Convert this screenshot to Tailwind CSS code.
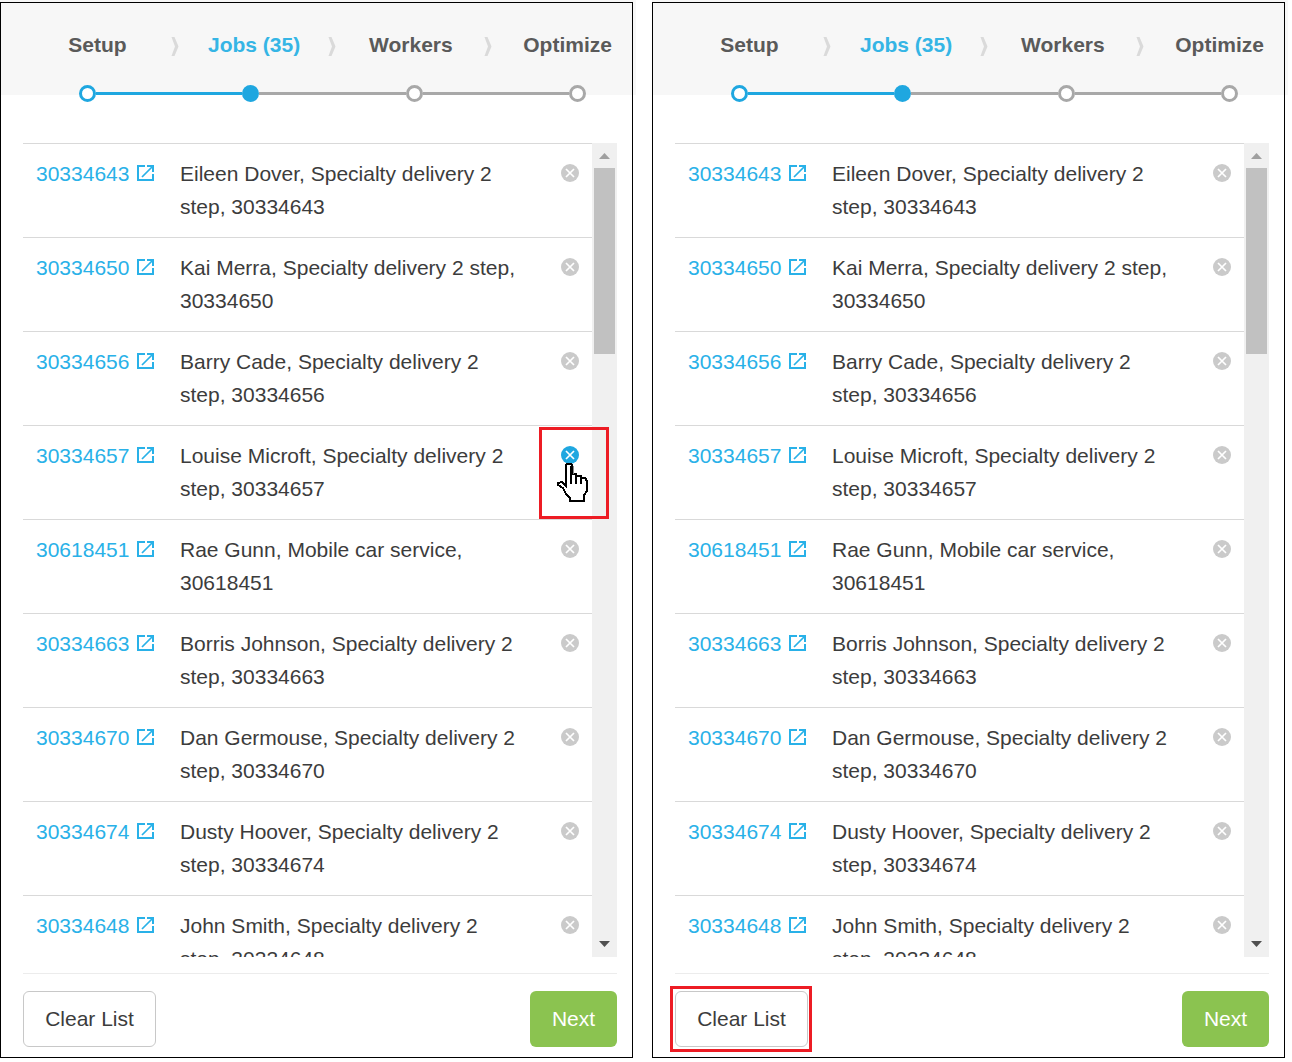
<!DOCTYPE html>
<html lang="en">

<head>
    <meta charset="UTF-8">
    <meta name="viewport" content="width=device-width, initial-scale=1.0">
    <title>Route Optimizer - Jobs</title>
    <script src="https://cdn.jsdelivr.net/npm/@tailwindcss/browser@4"></script>
</head>

<body class="bg-white font-['Liberation_Sans',Arial,sans-serif] text-[21px] text-[#3c3c3c]">
    <main id="panels" class="isolate grid grid-cols-2 gap-[19px] pt-[2px] pr-[7px]"></main>

    <script>
        const jobs = [
            { id: "30334643", name: "Eileen Dover", type: "Specialty delivery 2 step" },
            { id: "30334650", name: "Kai Merra", type: "Specialty delivery 2 step" },
            { id: "30334656", name: "Barry Cade", type: "Specialty delivery 2 step" },
            { id: "30334657", name: "Louise Microft", type: "Specialty delivery 2 step" },
            { id: "30618451", name: "Rae Gunn", type: "Mobile car service" },
            { id: "30334663", name: "Borris Johnson", type: "Specialty delivery 2 step" },
            { id: "30334670", name: "Dan Germouse", type: "Specialty delivery 2 step" },
            { id: "30334674", name: "Dusty Hoover", type: "Specialty delivery 2 step" },
            { id: "30334648", name: "John Smith", type: "Specialty delivery 2 step" }
        ];

        const steps = ["Setup", "Jobs (35)", "Workers", "Optimize"];

        // Each panel marks one way of removing jobs
        const panels = [
            { hoveredJob: "30334657", markClear: false },
            { hoveredJob: null, markClear: true }
        ];

        const cursor = `
            <svg class="absolute left-[15px] top-[33px] w-[32px] h-[40px]" viewBox="0 0 32 40" shape-rendering="crispEdges" aria-hidden="true">
                <path d="M9 23V2l1-1h4l1 1v9h4v2h5v2h4l2 3v10l-3 4v6H13v-3l-4-4-3-6-5-3v-2l4-1z" fill="#fff" stroke="#000" stroke-width="2"/>
                <path d="M14 3v18M19 12v9M24 14v7" fill="none" stroke="#000" stroke-width="2"/>
                <path d="M16 3v8" stroke="#8a8a8a"/>
            </svg>`;

        function renderStep(label, index) {
            return `
                <li class="relative text-center ${index === 1 ? 'text-[#35b5e5]' : ''}">
                    <a href="#">${label}</a>
                    ${index < 3 ? `
                    <svg class="absolute -right-[3px] top-2 w-2 h-5" viewBox="0 0 8 20" aria-hidden="true">
                        <path d="M0.500 0h3l4 9.500-4 9.500h-3l3.500-9.500z" fill="#dadada"/>
                    </svg>` : ''}
                </li>`;
        }

        function renderJob(job, hovered) {
            return `
                <tr class="border-t border-[#d9d9d9] align-top">
                    <td class="pt-[13px] pb-[14px] pl-[13px]">
                        <a href="#" class="flex items-center gap-2 leading-[33px] text-[#29b1e8]">${job.id}
                            <svg class="size-[17px]" viewBox="0 0 17 17" fill="none" stroke="currentColor" stroke-width="2" aria-hidden="true">
                                <path d="M8 1H1v14h15V9M10 1h6v6"/>
                                <path d="M16 1L5 12" stroke-width="1.700"/>
                            </svg>
                        </a>
                    </td>
                    <td class="pt-[13px] pr-[10px] pb-[14px] leading-[33px]">${job.name}, ${job.type}, ${job.id}</td>
                    <td class="relative pt-5 pr-[13px]">
                        <button type="button" aria-label="Remove ${job.id}" class="ml-auto block size-[18px] ${hovered ? 'text-[#1fa7e0]' : 'text-[#cacaca]'}">
                            <svg class="size-[18px]" viewBox="0 0 18 18" aria-hidden="true">
                                <circle cx="9" cy="9" r="9" fill="currentColor"/>
                                <path d="M5 5l8 8M13 5l-8 8" stroke="#fff" stroke-width="1.700"/>
                            </svg>
                        </button>
                        ${hovered ? `<div class="absolute left-[1px] top-[1px] z-10 w-[70px] h-[92px] border-3 border-[#ed1c24]">${cursor}</div>` : ''}
                    </td>
                </tr>`;
        }

        function renderPanel(panel) {
            return `
                <section class="relative border border-black">
                    <div class="absolute -top-[3px] -right-1 -left-px -z-10 h-[95px] bg-[#f7f7f7]"></div>
                    <nav class="h-[92px] bg-[#f7f7f7] pt-[26px]">
                        <ol class="ml-[18px] -mr-[14px] grid grid-cols-4 font-bold leading-8 text-[#5a5a5a]">
                            ${steps.map(renderStep).join('')}
                        </ol>
                    </nav>
                    <!-- Progress track -->
                    <div class="relative -mt-[10px] ml-[78px] mr-[46px] flex items-center">
                        <span class="size-[17px] rounded-full border-3 border-[#1fa7e0] bg-white"></span>
                        <span class="h-[3px] flex-1 bg-[#1fa7e0]"></span>
                        <span class="size-[17px] rounded-full bg-[#1fa7e0]"></span>
                        <span class="h-[3px] flex-1 bg-[#a8a8a8]"></span>
                        <span class="size-[17px] rounded-full border-3 border-[#a8a8a8] bg-white"></span>
                        <span class="h-[3px] flex-1 bg-[#a8a8a8]"></span>
                        <span class="size-[17px] rounded-full border-3 border-[#a8a8a8] bg-white"></span>
                    </div>
                    <!-- Job list -->
                    <div class="mt-[41px] mr-[15px] ml-[22px] flex h-[814px] overflow-hidden">
                        <div class="flex-1">
                            <table class="w-full table-fixed border-collapse text-left">
                                <colgroup><col class="w-[157px]"><col><col class="w-[54px]"></colgroup>
                                <tbody>${jobs.map(job => renderJob(job, job.id === panel.hoveredJob)).join('')}</tbody>
                            </table>
                        </div>
                        <div class="flex w-[25px] flex-col items-center bg-[#f0f0f0]">
                            <svg class="h-[25px] w-[11px] shrink-0" viewBox="0 0 11 25" aria-hidden="true"><path d="M0 16l5.500-6 5.500 6z" fill="#a0a0a0"/></svg>
                            <div class="h-[186px] w-[21px] bg-[#c1c1c1]"></div>
                            <svg class="mt-auto h-[25px] w-[11px] shrink-0" viewBox="0 0 11 25" aria-hidden="true"><path d="M0 9l5.500 6L11 9z" fill="#505050"/></svg>
                        </div>
                    </div>
                    <footer class="mt-4 mr-[15px] mb-[10px] ml-[22px] flex justify-between border-t border-[#ececec] pt-[17px]">
                        <div class="relative">
                            <button type="button" class="h-14 w-[133px] rounded-md border border-[#c8c8c8]">Clear List</button>
                            ${panel.markClear ? '<div class="absolute -top-[5px] -right-1 -bottom-[5px] -left-[5px] border-3 border-[#ed1c24]"></div>' : ''}
                        </div>
                        <button type="button" class="h-14 w-[87px] rounded-md bg-[#8bc350] font-medium text-white">Next</button>
                    </footer>
                </section>`;
        }

        document.getElementById('panels').innerHTML = panels.map(renderPanel).join('');
    </script>
</body>

</html>
